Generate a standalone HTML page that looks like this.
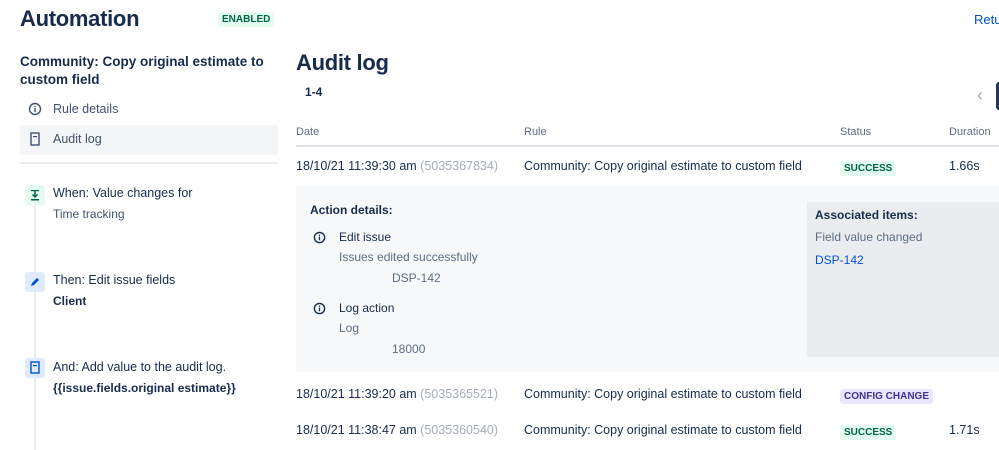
<!DOCTYPE html>
<html><head><meta charset="utf-8"><style>
*{margin:0;padding:0;box-sizing:border-box}
body{width:999px;height:450px;overflow:hidden;background:#fff;font-family:"Liberation Sans",sans-serif;color:#172b4d;position:relative}
.a{position:absolute;white-space:nowrap}
.t{font-size:12.5px}
.g{color:#5e6c84}
.lz{color:#a5adba}
.lozenge{position:absolute;font-size:10px;font-weight:bold;padding:2px 4px;border-radius:3px;line-height:11px}
.suc{background:#e3fcef;color:#006644}
.cfg{background:#eae6ff;color:#403294}
.ic{position:absolute;width:16px;height:16px;border-radius:3px}
</style></head><body>
<div class="a" style="left:20px;top:6px;font-size:22px;font-weight:bold;letter-spacing:-0.3px">Automation</div>
<div class="lozenge suc" style="left:218px;top:12px">ENABLED</div>
<div class="a" style="left:974px;top:12px;font-size:13px;color:#0052cc">Retu</div>

<div class="a" style="left:20px;top:53px;font-size:13.5px;font-weight:bold;line-height:18px;white-space:normal;width:255px">Community: Copy original estimate to custom field</div>
<svg class="a" style="left:28px;top:102px" width="14" height="14" viewBox="0 0 14 14"><circle cx="7" cy="7" r="5.5" fill="none" stroke="#42526e" stroke-width="1.4"/><rect x="6.3" y="6" width="1.4" height="4" fill="#42526e"/><rect x="6.3" y="3.8" width="1.4" height="1.4" fill="#42526e"/></svg>
<div class="a t" style="left:53px;top:102px;color:#42526e">Rule details</div>
<div class="a" style="left:20px;top:125px;width:258px;height:30px;background:#f4f5f7;border-radius:3px"></div>
<svg class="a" style="left:30px;top:132px" width="10" height="14" viewBox="0 0 10 14"><rect x="1" y="1" width="8" height="12" fill="none" stroke="#42526e" stroke-width="1.4"/><rect x="3" y="4" width="4" height="1.2" fill="#42526e"/></svg>
<div class="a t" style="left:53px;top:132px;color:#42526e">Audit log</div>
<div class="a" style="left:20px;top:162px;width:258px;height:2px;background:#ebecf0"></div>

<div class="a" style="left:34px;top:195px;width:2px;height:255px;background:#ebecf0"></div>
<div class="ic" style="left:25px;top:185px;width:20px;height:20px;background:#e3fcef"></div>
<svg class="a" style="left:29px;top:189px" width="12" height="12" viewBox="0 0 12 12"><rect x="2" y="10" width="8" height="1.5" fill="#006644"/><path d="M6 2v6M3.5 5.5L6 8l2.5-2.5" stroke="#006644" stroke-width="1.5" fill="none"/><rect x="2" y="1" width="8" height="1.2" fill="#006644"/></svg>
<div class="a t" style="left:53px;top:186px">When: Value changes for</div>
<div class="a" style="left:53px;top:207px;font-size:12px;color:#42526e">Time tracking</div>

<div class="ic" style="left:25px;top:272px;width:20px;height:20px;background:#deebff"></div>
<svg class="a" style="left:29px;top:276px" width="12" height="12" viewBox="0 0 12 12"><path d="M2 10l1-3 5-5 2 2-5 5z" fill="#0052cc"/></svg>
<div class="a t" style="left:53px;top:273px">Then: Edit issue fields</div>
<div class="a" style="left:53px;top:294px;font-size:12px;font-weight:bold">Client</div>

<div class="ic" style="left:25px;top:358px;width:20px;height:20px;background:#deebff"></div>
<svg class="a" style="left:30px;top:361px" width="10" height="14" viewBox="0 0 10 14"><rect x="1" y="1" width="8" height="11" fill="none" stroke="#0052cc" stroke-width="1.4"/><rect x="3" y="4" width="4" height="1.2" fill="#0052cc"/></svg>
<div class="a t" style="left:53px;top:360px">And: Add value to the audit log.</div>
<div class="a" style="left:53px;top:381px;font-size:12px;font-weight:bold">{{issue.fields.original estimate}}</div>

<div class="a" style="left:296px;top:50px;font-size:22px;font-weight:bold;letter-spacing:-0.3px">Audit log</div>
<div class="a" style="left:305px;top:85px;font-size:12px;font-weight:bold">1-4</div>
<div class="a" style="left:977px;top:85px;font-size:18px;color:#a5adba">‹</div>
<div class="a" style="left:996px;top:82px;width:5px;height:28px;background:#253858;border-radius:3px 0 0 3px"></div>

<div class="a" style="left:296px;top:126px;font-size:11px;color:#5e6c84">Date</div>
<div class="a" style="left:524px;top:126px;font-size:11px;color:#5e6c84">Rule</div>
<div class="a" style="left:840px;top:126px;font-size:11px;color:#5e6c84">Status</div>
<div class="a" style="left:949px;top:126px;font-size:11px;color:#5e6c84">Duration</div>
<div class="a" style="left:296px;top:145px;width:703px;height:2px;background:#dfe1e6"></div>

<div class="a t" style="left:296px;top:159px">18/10/21 11:39:30 am <span class="lz">(5035367834)</span></div>
<div class="a t" style="left:524px;top:159px">Community: Copy original estimate to custom field</div>
<div class="lozenge suc" style="left:840px;top:161px">SUCCESS</div>
<div class="a t" style="left:949px;top:159px">1.66s</div>

<div class="a" style="left:296px;top:186px;width:703px;height:186px;background:#f7f8f9"></div>
<div class="a" style="left:807px;top:202px;width:192px;height:155px;background:#ebecf0"></div>
<div class="a" style="left:310px;top:203px;font-size:12px;font-weight:bold">Action details:</div>
<svg class="a" style="left:313px;top:231px" width="13" height="13" viewBox="0 0 14 14"><circle cx="7" cy="7" r="5.5" fill="none" stroke="#172b4d" stroke-width="1.5"/><rect x="6.3" y="6" width="1.4" height="4" fill="#172b4d"/><rect x="6.3" y="3.8" width="1.4" height="1.4" fill="#172b4d"/></svg>
<div class="a" style="left:339px;top:230px;font-size:12px">Edit issue</div>
<div class="a g" style="left:339px;top:250px;font-size:12px">Issues edited successfully</div>
<div class="a g" style="left:392px;top:271px;font-size:12px">DSP-142</div>
<svg class="a" style="left:313px;top:302px" width="13" height="13" viewBox="0 0 14 14"><circle cx="7" cy="7" r="5.5" fill="none" stroke="#172b4d" stroke-width="1.5"/><rect x="6.3" y="6" width="1.4" height="4" fill="#172b4d"/><rect x="6.3" y="3.8" width="1.4" height="1.4" fill="#172b4d"/></svg>
<div class="a" style="left:339px;top:301px;font-size:12px">Log action</div>
<div class="a g" style="left:339px;top:321px;font-size:12px">Log</div>
<div class="a g" style="left:392px;top:342px;font-size:12px">18000</div>
<div class="a" style="left:815px;top:208px;font-size:12px;font-weight:bold">Associated items:</div>
<div class="a g" style="left:815px;top:230px;font-size:12px">Field value changed</div>
<div class="a" style="left:815px;top:253px;font-size:12px;color:#0052cc">DSP-142</div>

<div class="a t" style="left:296px;top:387px">18/10/21 11:39:20 am <span class="lz">(5035365521)</span></div>
<div class="a t" style="left:524px;top:387px">Community: Copy original estimate to custom field</div>
<div class="lozenge cfg" style="left:840px;top:389px">CONFIG CHANGE</div>

<div class="a t" style="left:296px;top:423px">18/10/21 11:38:47 am <span class="lz">(5035360540)</span></div>
<div class="a t" style="left:524px;top:423px">Community: Copy original estimate to custom field</div>
<div class="lozenge suc" style="left:840px;top:425px">SUCCESS</div>
<div class="a t" style="left:949px;top:423px">1.71s</div>
</body></html>
